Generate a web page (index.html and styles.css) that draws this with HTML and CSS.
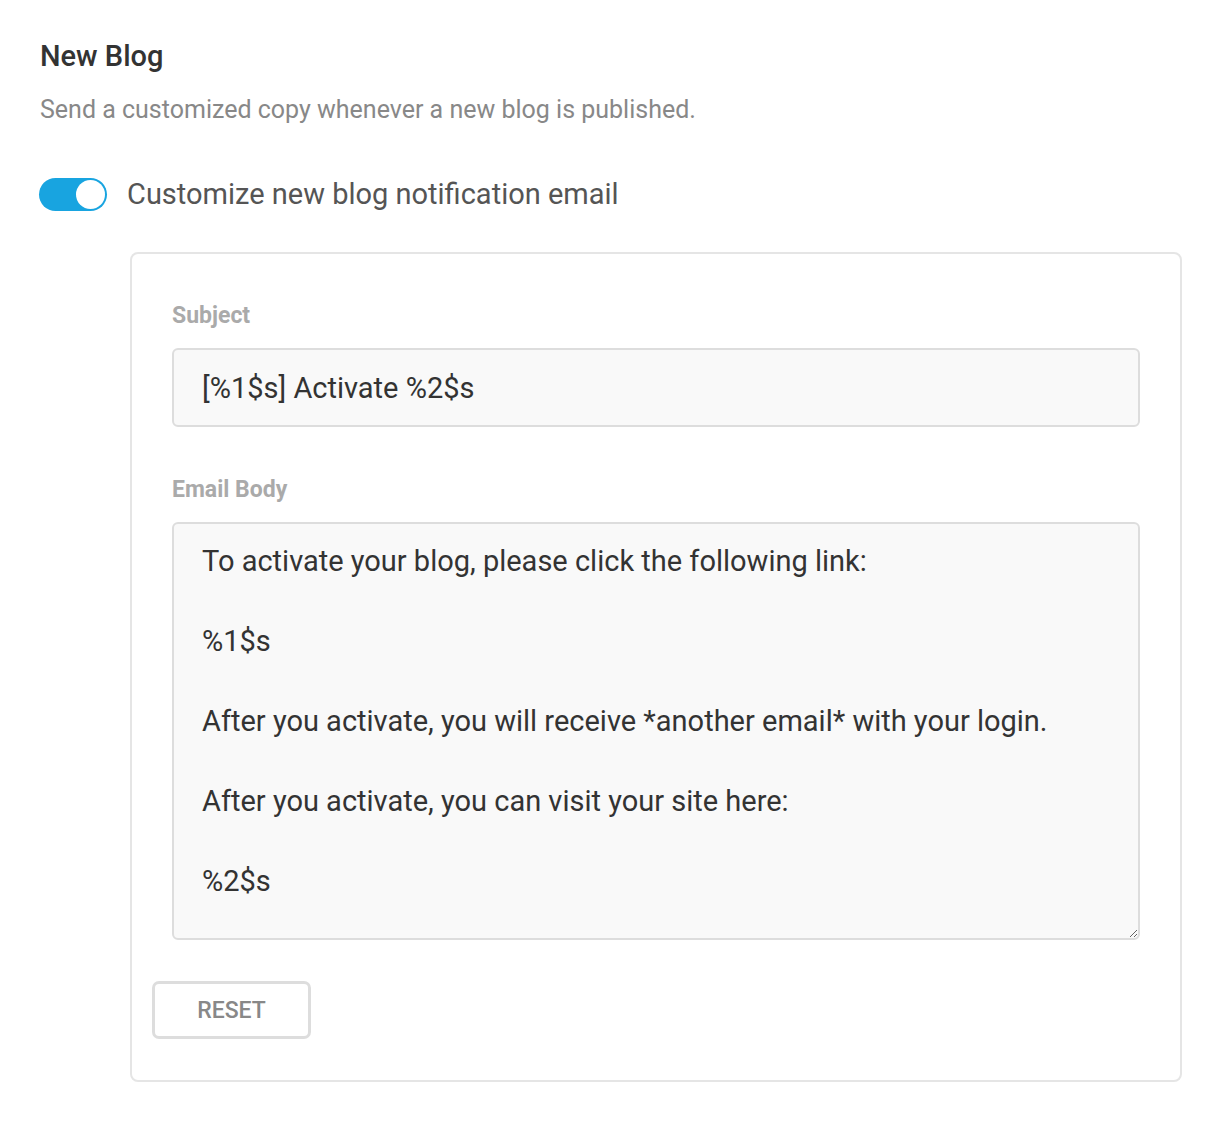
FILE: index.html
```html
<!DOCTYPE html>
<html>
<head>
<meta charset="utf-8">
<link rel="stylesheet" href="styles.css">
</head>
<body>
<div class="page">
  <h1 class="title">New Blog</h1>
  <p class="desc">Send a customized copy whenever a new blog is published.</p>
  <div class="toggle-row">
    <span class="toggle"><span class="knob"></span></span>
    <span class="toggle-label">Customize new blog notification email</span>
  </div>
  <div class="card">
    <div class="field">
      <label class="label">Subject</label>
      <input class="input" type="text" value="[%1$s] Activate %2$s">
    </div>
    <div class="field">
      <label class="label">Email Body</label>
      <textarea class="textarea">To activate your blog, please click the following link:

%1$s

After you activate, you will receive *another email* with your login.

After you activate, you can visit your site here:

%2$s</textarea>
    </div>
    <div class="actions">
      <button class="reset">RESET</button>
    </div>
  </div>
</div>
</body>
</html>
```

FILE: styles.css
```css
* { box-sizing: border-box; }
html, body { margin: 0; padding: 0; background: #fff; }
body { font-family: Roboto, "Liberation Sans", sans-serif; }
.page { padding: 38px 38px 0 40px; }
.title {
  margin: 0;
  font-size: 29px;
  line-height: 36px;
  font-weight: 500;
  color: #333;
}
.desc {
  margin: 20px 0 0;
  font-size: 25px;
  line-height: 32px;
  color: #888;
}
.toggle-row {
  display: flex;
  align-items: center;
  gap: 20px;
  margin-top: 50px;
}
.toggle {
  width: 68px;
  height: 33px;
  border-radius: 17px;
  background: #18a4e0;
  display: flex;
  align-items: center;
  justify-content: flex-end;
  padding: 2px;
  margin-left: -1px;
}
.knob {
  width: 29px;
  height: 29px;
  border-radius: 50%;
  background: #fff;
}
.toggle-label {
  font-size: 29px;
  line-height: 36px;
  color: #555;
}
.card {
  margin: 40px 0 0 90px;
  border: 2px solid #e5e5e5;
  border-radius: 8px;
  padding: 48px 40px 41px 40px;
}
.field { display: flex; flex-direction: column; }
.field + .field { margin-top: 49px; }
.label {
  font-size: 23px;
  line-height: 28px;
  font-weight: 700;
  color: #aaa;
  margin-bottom: 18px;
}
.input, .textarea {
  width: 100%;
  background: #f9f9f9;
  border: 2px solid #ddd;
  border-radius: 6px;
  font-family: Roboto, "Liberation Sans", sans-serif;
  font-size: 29px;
  color: #333;
  outline: none;
}
.input {
  height: 79px;
  padding: 0 28px;
}
.textarea {
  height: 418px;
  padding: 17px 28px;
  line-height: 40px;
  resize: vertical;
  overflow: hidden;
}
.actions { margin: 41px 0 0 -20px; }
.reset {
  width: 159px;
  height: 58px;
  border: 3px solid #ddd;
  border-radius: 7px;
  background: #fff;
  font-family: Roboto, "Liberation Sans", sans-serif;
  font-size: 23px;
  font-weight: 500;
  color: #888;
  padding: 0;
}
```
